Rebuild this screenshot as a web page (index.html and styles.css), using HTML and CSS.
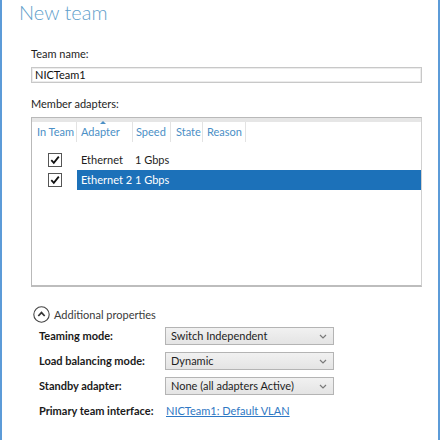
FILE: index.html
```html
<!DOCTYPE html>
<html>
<head>
<meta charset="utf-8">
<link rel="stylesheet" href="styles.css">
</head>
<body>
<div class="window">
  <h1 class="title">New team</h1>
  <div class="content">
    <div class="label first">Team name:</div>
    <div class="textbox">NICTeam1</div>
    <div class="label second">Member adapters:</div>
    <div class="listbox">
      <div class="list-top"></div>
      <div class="list-header">
        <div class="hcol h-inteam">In Team</div>
        <div class="hcol h-adapter">Adapter<span class="sort-arrow"></span></div>
        <div class="hcol h-speed">Speed</div>
        <div class="hcol h-state">State</div>
        <div class="hcol h-reason">Reason</div>
      </div>
      <div class="rows">
        <div class="row">
          <div class="cell c-check"><svg class="checkbox" width="14" height="14" viewBox="0 0 14 14"><rect x="0.5" y="0.5" width="13" height="13" fill="#fff" stroke="#555"/><path d="M3.3 7.2 L5.8 9.8 L10.8 3.6" fill="none" stroke="#111" stroke-width="1.8"/></svg></div>
          <div class="cell c-name">Ethernet</div>
          <div class="cell c-speed">1 Gbps</div>
        </div>
        <div class="row selected">
          <div class="cell c-check"><svg class="checkbox" width="14" height="14" viewBox="0 0 14 14"><rect x="0.5" y="0.5" width="13" height="13" fill="#fff" stroke="#555"/><path d="M3.3 7.2 L5.8 9.8 L10.8 3.6" fill="none" stroke="#111" stroke-width="1.8"/></svg></div>
          <div class="sel">
            <div class="cell c-name">Ethernet 2</div>
            <div class="cell c-speed">1 Gbps</div>
          </div>
        </div>
      </div>
    </div>
    <div class="additional">
      <svg class="circle-icon" width="17" height="17" viewBox="0 0 17 17"><circle cx="8.5" cy="8.5" r="7.7" fill="#fff" stroke="#444" stroke-width="1.1"/><path d="M5.3 10 L8.5 6.6 L11.7 10" fill="none" stroke="#333" stroke-width="1.7"/></svg>
      <span>Additional properties</span>
    </div>
    <div class="props">
      <div class="plabel">Teaming mode:</div>
      <div class="dropdown"><span>Switch Independent</span><svg width="8" height="5" viewBox="0 0 8 5"><path d="M1 1 L4 4 L7 1" fill="none" stroke="#7a7a7a" stroke-width="1.2"/></svg></div>
      <div class="plabel">Load balancing mode:</div>
      <div class="dropdown"><span>Dynamic</span><svg width="8" height="5" viewBox="0 0 8 5"><path d="M1 1 L4 4 L7 1" fill="none" stroke="#7a7a7a" stroke-width="1.2"/></svg></div>
      <div class="plabel">Standby adapter:</div>
      <div class="dropdown"><span>None (all adapters Active)</span><svg width="8" height="5" viewBox="0 0 8 5"><path d="M1 1 L4 4 L7 1" fill="none" stroke="#7a7a7a" stroke-width="1.2"/></svg></div>
      <div class="plabel">Primary team interface:</div>
      <div class="pvalue"><a class="link" href="#">NICTeam1: Default VLAN</a></div>
    </div>
  </div>
</div>
</body>
</html>
```
FILE: styles.css
```css
html, body {
  margin: 0;
  padding: 0;
  background: #fff;
}
body {
  font-family: Lato, "Noto Sans", sans-serif;
  font-size: 11px;
  color: #1e1e1e;
}
.window {
  width: 440px;
  height: 440px;
  box-sizing: border-box;
  border-left: 2px solid #5c9bd8;
  border-right: 2px solid #5c9bd8;
  overflow: hidden;
  background: #fff;
}
.title {
  margin: 0;
  padding-left: 17px;
  height: 24px;
  font-family: Lato, "Noto Sans", sans-serif;
  font-weight: 300;
  font-size: 20px;
  line-height: 24px;
  color: #5f9fcb;
}
.content {
  padding-left: 29px;
  padding-right: 16px;
}
.label {
  height: 16px;
  line-height: 16px;
}
.label.first { margin-top: 22px; }
.label.second { margin-top: 13px; }
.textbox {
  margin-top: 5px;
  height: 16px;
  box-sizing: border-box;
  border: 1px solid #c8c8c8;
  box-shadow: inset 0 0 0 1px #ececec;
  padding-left: 3px;
  line-height: 14px;
  color: #111;
}
.listbox {
  margin-top: 5px;
  height: 170px;
  box-sizing: border-box;
  border: 1px solid #b9b9b9;
  border-right-color: #d0d0d0;
  border-bottom: 2px solid #bdbdbd;
  overflow: hidden;
}
.list-top {
  height: 4px;
  background: #e6e6e6;
}
.list-header {
  display: flex;
  height: 20px;
  color: #4b8fc6;
}
.hcol {
  position: relative;
  box-sizing: border-box;
  line-height: 20px;
  border-right: 1px solid #e3e3e3;
  white-space: nowrap;
}
.h-inteam { width: 45px; padding-left: 5px; }
.h-adapter { width: 56px; padding-left: 4px; }
.h-speed { width: 38px; padding-left: 3px; }
.h-state { width: 32px; padding-left: 5px; }
.h-reason { width: 43px; padding-left: 4px; }
.sort-arrow {
  position: absolute;
  left: 23px;
  top: -1px;
  width: 0;
  height: 0;
  border-left: 3px solid transparent;
  border-right: 3px solid transparent;
  border-bottom: 3px solid #4b8fc6;
}
.rows {
  margin-top: 8px;
}
.row {
  display: flex;
  height: 20px;
  align-items: stretch;
}
.cell {
  line-height: 20px;
  white-space: nowrap;
}
.c-check {
  width: 45px;
  display: flex;
  align-items: center;
  justify-content: center;
}
.checkbox { display: block; }
.c-name {
  width: 58px;
  padding-left: 4px;
  box-sizing: border-box;
}
.c-speed {
  padding-left: 0;
}
.sel {
  flex: 1;
  display: flex;
  background: #1c71b9;
  color: #fff;
}
.additional {
  margin-top: 18px;
  height: 18px;
  display: flex;
  align-items: center;
  gap: 4px;
  padding-left: 2px;
  color: #3a3a3a;
}
.circle-icon { display: block; }
.props {
  margin-top: 4px;
  display: grid;
  grid-template-columns: 126px 169px;
  grid-auto-rows: 18px;
  row-gap: 7px;
  padding-left: 8px;
}
.plabel {
  font-weight: bold;
  line-height: 18px;
  color: #1a1a1a;
  white-space: nowrap;
}
.dropdown {
  box-sizing: border-box;
  border: 1px solid #b4b4b4;
  background: linear-gradient(#f1f1f1, #e4e4e4);
  display: flex;
  align-items: center;
  justify-content: space-between;
  padding: 0 6px 0 5px;
  line-height: 16px;
  color: #1e1e1e;
}
.dropdown svg { display: block; }
.pvalue {
  line-height: 18px;
  padding-left: 1px;
}
.link {
  color: #2f78c4;
  text-decoration: underline;
}
```
